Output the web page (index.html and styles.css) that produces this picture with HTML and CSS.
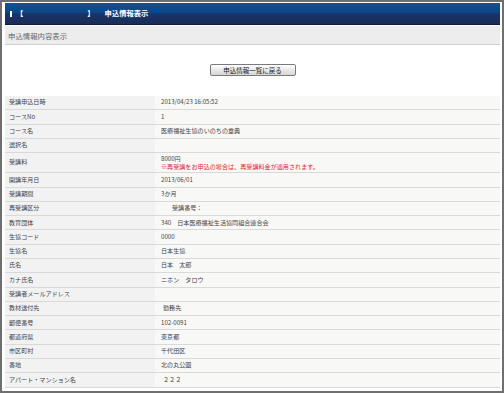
FILE: index.html
```html
<!DOCTYPE html>
<html lang="ja">
<head>
<meta charset="utf-8">
<title>申込情報表示</title>
<link rel="stylesheet" href="styles.css">
</head>
<body>
<div class="frame">
  <div class="titlebar">
    <span class="marker"></span>
    <span class="bracket-l">【</span>
    <span class="blank"></span>
    <span class="bracket-r">】</span>
    <span class="title">申込情報表示</span>
  </div>
  <div class="subbar">申込情報内容表示</div>
  <div class="actions">
    <button class="btn" type="button">申込情報一覧に戻る</button>
  </div>
  <table class="info">
    <tr><th>受講申込日時</th><td>2013/04/23 16:05:52</td></tr>
    <tr><th>コースNo</th><td>1</td></tr>
    <tr><th>コース名</th><td>医療福祉生協のいのちの章典</td></tr>
    <tr><th>選択名</th><td></td></tr>
    <tr class="double"><th>受講料</th><td>8000円<br><span class="warn">※再受講をお申込の場合は、再受講料金が適用されます。</span></td></tr>
    <tr><th>開講年月日</th><td>2013/06/01</td></tr>
    <tr><th>受講期間</th><td>3か月</td></tr>
    <tr><th>再受講区分</th><td><span class="indent">受講番号：</span></td></tr>
    <tr><th>教育団体</th><td>340　日本医療福祉生活協同組合連合会</td></tr>
    <tr><th>生協コード</th><td>0000</td></tr>
    <tr><th>生協名</th><td>日本生協</td></tr>
    <tr><th>氏名</th><td>日本　太郎</td></tr>
    <tr><th>カナ氏名</th><td>ニホン　タロウ</td></tr>
    <tr><th>受講者メールアドレス</th><td></td></tr>
    <tr><th>教材送付先</th><td><span class="nudge">勤務先</span></td></tr>
    <tr><th>郵便番号</th><td>102-0091</td></tr>
    <tr><th>都道府県</th><td>東京都</td></tr>
    <tr><th>市区町村</th><td>千代田区</td></tr>
    <tr><th>番地</th><td>北の丸公園</td></tr>
    <tr><th>アパート・マンション名</th><td><span class="nudge">２２２</span></td></tr>
  </table>
</div>
</body>
</html>
```
FILE: styles.css
```css
html, body {
  margin: 0;
  padding: 0;
  background: #ffffff;
}

body {
  font-family: "Noto Sans CJK JP", "Noto Sans", sans-serif;
  color: #444;
}

.frame {
  box-sizing: border-box;
  width: 504px;
  height: 393px;
  border: 2px solid #6f6f6f;
  padding: 1px 2px 0 3px;
  overflow: hidden;
  background: #fff;
}

.titlebar {
  height: 22px;
  display: flex;
  align-items: center;
  background: linear-gradient(#0f5199 0%, #0b4786 45%, #183467 52%, #1a2d58 100%);
  border-bottom: 1px solid #101d3a;
  box-sizing: border-box;
  color: #fff;
  font-size: 7.3px;
  font-weight: bold;
  line-height: 1;
}

.marker {
  width: 2px;
  height: 6px;
  background: #fff;
  margin-left: 5px;
}

.bracket-l {
  margin-left: 4px;
}

.blank {
  width: 64px;
}

.title {
  margin-left: 10px;
}

.subbar {
  margin-top: 1px;
  height: 18px;
  display: flex;
  align-items: center;
  padding-left: 3px;
  background: #ededed;
  border-bottom: 1px solid #cfcfcf;
  color: #666;
  font-size: 7.4px;
}

.actions {
  display: flex;
  justify-content: center;
  padding: 19px 0 20px;
}

.btn {
  box-sizing: border-box;
  width: 86px;
  height: 12px;
  padding: 0;
  border: 1px solid #7a7a7a;
  border-radius: 2px;
  background: linear-gradient(#ffffff, #e9e9e9 50%, #d6d6d6);
  font-family: "Noto Sans CJK JP", sans-serif;
  font-size: 6.5px;
  color: #222;
  line-height: 10px;
}

.info {
  width: 100%;
  border-collapse: collapse;
  font-size: 6.1px;
}

.info th,
.info td {
  text-align: left;
  font-weight: normal;
  vertical-align: middle;
  line-height: 8.5px;
  padding: 2.4px 4px 2.4px 4px;
  border-bottom: 1px solid #d9d9d9;
}

.info th {
  width: 142px;
  background: #f2f2f2;
  color: #444;
}

.info td {
  background: #f8f8f7;
  padding-left: 6px;
  color: #444;
}

.info tr.double td {
  line-height: 7.6px;
  padding-top: 2px;
  padding-bottom: 2px;
}

.warn {
  color: #e0262c;
}

.indent {
  padding-left: 11px;
}

.nudge {
  padding-left: 2px;
}
```
